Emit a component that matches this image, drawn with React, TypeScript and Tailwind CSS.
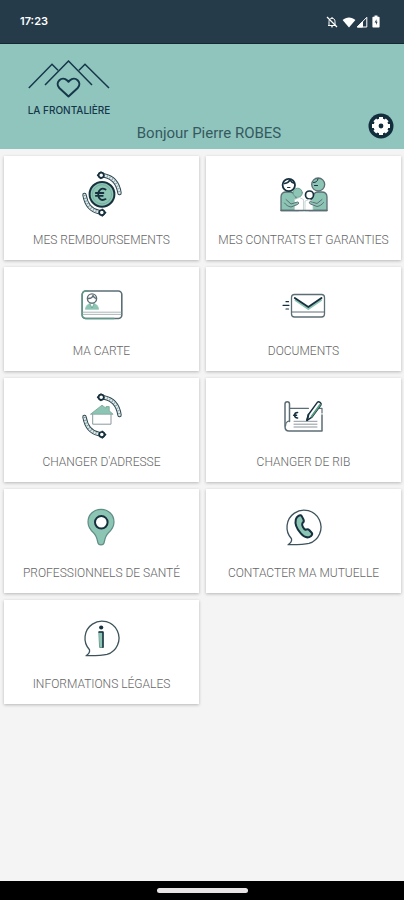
import type { ReactNode } from "react";

const INK = "#17303d";
const MINT = "#8cc5b4";
const LINE = "#5c6e75";

function Icon({ children }: { children: ReactNode }) {
  return (
    <svg
      viewBox="0 0 48 48"
      className="size-12"
      fill="none"
      stroke={INK}
      strokeWidth="1.3"
      strokeLinecap="round"
      strokeLinejoin="round"
      aria-hidden="true"
    >
      {children}
    </svg>
  );
}

// The two striped arrows that turn around an icon
function Rotation() {
  const bands = ["M26 5.5C34 7 40 13 41.5 23", "M6.5 25C8 34 13 40.5 21 42"];
  return (
    <g>
      {bands.map((d) => (
        <g key={d}>
          <path d={d} stroke="#2c4650" strokeWidth="4.4" />
          <path d={d} stroke="#dfeaea" strokeWidth="2.4" />
          <path d={d} strokeWidth="2.4" strokeLinecap="butt" strokeDasharray="0.9 2" stroke="#7f979c" />
        </g>
      ))}
      <path d="M19.5 5.2 23 2v6.600z" fill={INK} />
      <path d="M27.800 42.600 24.200 39.200V46z" fill={INK} />
      <circle cx="23.200" cy="5.200" r="2.600" fill="#fff" strokeWidth="1.700" />
      <circle cx="23.800" cy="42.600" r="2.600" fill="#fff" strokeWidth="1.700" />
    </g>
  );
}

function RefundIcon() {
  return (
    <Icon>
      <Rotation />
      <circle cx="24" cy="24.3" r="12.4" fill={MINT} strokeWidth="2" />
      <circle cx="24" cy="24.3" r="9.6" stroke="#6fa899" strokeWidth="0.8" />
      <path d="M27.6 19.6c-4-2.4-7.4.4-7.4 4.7s3.4 7.2 7.4 4.8M17.8 23h7.6M17.8 25.8h7" strokeWidth="1.8" />
    </Icon>
  );
}

function FamilyIcon() {
  return (
    <Icon>
      <path d="M1 40.5V27c0-3.5 2-5 5.5-5h4c3 0 4.5 2 6 6.5l2 5.5v6.5z" fill={MINT} stroke={LINE} />
      <path d="M47 40.5V27c0-3.5-2-5-5.5-5H38c-3 0-5 2-6 6.5l-3 4.500v7.500z" fill={MINT} stroke={LINE} />
      <circle cx="8.800" cy="15" r="6.200" fill="#fff" strokeWidth="1.800" />
      <path d="M4.500 13.500C7 13 9 11.800 10 9.800c1 2 2.500 3 4.500 3.500" strokeWidth="1.500" />
      <path d="M7.500 17.500h2.500" strokeWidth="1" />
      <circle cx="38.200" cy="14.500" r="6.500" fill={MINT} stroke={LINE} />
      <path d="M33.500 12.500c2.500 0 4-1.200 4.500-3.500M34.500 15.500h3" strokeWidth="1" />
      <circle cx="17.700" cy="22.800" r="4.600" fill={MINT} stroke="#6d9c91" strokeWidth="1" />
      <circle cx="29.500" cy="25" r="4" fill="#fff" strokeWidth="1.700" />
      <path d="M14.500 40.500V29.500l5-2 4 2v11z" fill="#fff" stroke="#b9cbc9" strokeWidth="0.800" />
      <path d="M25 40.500V31l4-1.500 4 2v9z" fill="#fff" stroke="#b9cbc9" strokeWidth="0.800" />
      <path
        d="M6 29.500l5 4.500 6.500-2c1.500 0 1.500 2 0 2.500l-6.500 2.500c-3-.5-5-2-6.500-4M42 29.500l-5 4-6.500-2c-1.500 0-1.500 2 0 2.500l6.500 2.500c3-.5 5-2 6.500-4"
        fill={MINT}
        stroke={LINE}
        strokeWidth="1"
      />
      <path d="M1 40.500h46" stroke={LINE} />
    </Icon>
  );
}

function CardIcon() {
  return (
    <Icon>
      <rect x="4.200" y="10" width="39.600" height="27.500" rx="3.500" stroke={LINE} strokeWidth="1.600" />
      <path d="M10 10H8a3.500 3.500 0 0 0-3.800 3.500v20.500A3.500 3.500 0 0 0 8 37.500h28" stroke="#5d9a87" strokeWidth="1.400" />
      <path d="M5 31.200h38M5 33.400h38" stroke="#a3aeb0" strokeWidth="0.900" />
      <path d="M7.500 28c.5-4 3-5.500 6.500-5.500s6 1.500 6.500 5.500z" fill={MINT} stroke={MINT} strokeWidth="0.800" />
      <path d="M12 23l2 4 2-4" fill="#fff" stroke="#5d9a87" strokeWidth="0.800" />
      <circle cx="14" cy="17.500" r="4.600" fill="#fff" stroke={LINE} strokeWidth="1.400" />
      <path d="M10.500 17.500c2.500 0 4-1 4.500-3 .5 1.500 1.500 2.500 3 3" stroke={LINE} />
    </Icon>
  );
}

function MailIcon() {
  return (
    <Icon>
      <rect x="11.500" y="13.500" width="33" height="22.500" rx="3" stroke={LINE} strokeWidth="1.300" />
      <path d="M12 31h32" stroke={LINE} strokeWidth="1" />
      <path d="M15.500 19.200 28.300 28l12.700-8.800" stroke={MINT} strokeWidth="2" />
      <path d="M14.800 17 28.300 26 41.500 17" strokeWidth="1.900" />
      <path d="M6 20.700h2.500M3 24.300h6M6 28h2.500" strokeWidth="1.200" />
    </Icon>
  );
}

function HomeIcon() {
  return (
    <Icon>
      <Rotation />
      <path d="M14.700 22v10.200H33V22" fill="#fff" stroke="#8c989b" strokeWidth="1" />
      <path d="M12.800 22 24 13.200l4 3v-1.600h3.200v4.200l3.600 3.200z" fill={MINT} stroke="#7fa79c" strokeWidth="0.900" />
    </Icon>
  );
}

function ChequeIcon() {
  return (
    <Icon>
      <path d="M9.500 29.500V12c0-3-4.500-3-4.500 0v22.500c0 3 1.500 4.500 4 4.500h33V23" stroke={LINE} strokeWidth="1.500" />
      <path d="M5.500 34c0-5 4-5.500 4-4.500M9.500 16.300h19M38.500 16.300H42V21" stroke={LINE} strokeWidth="1.200" />
      <path d="M14 29.300h23M14 32.200h23M14 35h23" stroke="#8b989b" strokeWidth="1" />
      <path d="M17.600 20.500c-2.200 0-3 1.200-3 2.700s.8 2.700 3 2.700M13.600 23.200h3" strokeWidth="1.500" />
      <path d="M27 28.300 28.500 22.500 37.500 10.200c1.300-1.300 4.300.8 3.500 2.600L32 25.200z" fill="#fff" strokeWidth="1.400" />
      <path d="M31.500 24.500 40 12.800" stroke="#559c82" strokeWidth="1.800" />
      <path d="M27 28.300 28.500 22.500" strokeWidth="1.800" />
    </Icon>
  );
}

function PinIcon() {
  return (
    <Icon>
      <path
        d="M23 6.300c7.500 0 13 5.500 13 12.700 0 5-2.500 8-5.500 10.800-2.500 2.400-3.500 5-4.300 9.500-.6 3.400-5.800 3.400-6.400 0-.8-4.500-1.800-7.100-4.300-9.500C12.500 27 10 24 10 19c0-7.200 5.500-12.700 13-12.700z"
        fill={MINT}
        stroke="#5f8e84"
        strokeWidth="1.200"
      />
      <circle cx="23.300" cy="19.300" r="6.300" fill="#fff" strokeWidth="2" />
    </Icon>
  );
}

function Bubble() {
  return (
    <path
      d="M8 41.700c2.800-1.500 4-3.500 3.500-6A17 17 0 1 1 29 40.400c-6 1.500-13 1.300-21 1.300z"
      stroke="#3d525b"
      strokeWidth="1.300"
    />
  );
}

function PhoneIcon() {
  return (
    <Icon>
      <Bubble />
      <path
        d="M18.500 12.800c1.600-1 2.800-.5 3.500.8l1.600 3.200c.6 1.300.2 2.300-1.300 3.500-.8 1.900 1.400 5.800 3.200 6.400 1.700-.6 2.900-.5 3.900.5l2.300 2.500c.9 1.200.7 2.100-.6 3.200-2.900 2.400-6.600 1.700-10.300-2.500-3.900-4.500-6-10.100-5-14 .5-1.900 1.400-2.800 2.700-3.600z"
        fill={MINT}
        strokeWidth="2"
      />
    </Icon>
  );
}

function InfoIcon() {
  return (
    <Icon>
      <Bubble />
      <circle cx="23.200" cy="13.500" r="2.100" fill={INK} stroke="none" />
      <path d="M21.200 18h3.800v15.500h-3z" fill={MINT} stroke="#4f8577" strokeWidth="0.800" />
      <path d="M21 18.100h4v15.200" strokeWidth="1.500" />
    </Icon>
  );
}

const tiles = [
  { label: "MES REMBOURSEMENTS", icon: <RefundIcon /> },
  { label: "MES CONTRATS ET GARANTIES", icon: <FamilyIcon /> },
  { label: "MA CARTE", icon: <CardIcon /> },
  { label: "DOCUMENTS", icon: <MailIcon /> },
  { label: "CHANGER D'ADRESSE", icon: <HomeIcon /> },
  { label: "CHANGER DE RIB", icon: <ChequeIcon /> },
  { label: "PROFESSIONNELS DE SANTÉ", icon: <PinIcon /> },
  { label: "CONTACTER MA MUTUELLE", icon: <PhoneIcon /> },
  { label: "INFORMATIONS LÉGALES", icon: <InfoIcon /> },
];

function StatusBar() {
  return (
    <div className="flex h-11 items-center justify-between border-b border-[#122833] bg-[#263b4a] pr-6 pl-5 text-white">
      <span className="font-['Inter'] text-[11px] font-semibold">17:23</span>
      <div className="flex items-center">
        <svg viewBox="0 0 12 12" className="size-3" fill="none" stroke="#fff" strokeWidth="1" aria-hidden="true">
          <path d="M2 9.500h8M3 9V5.500C3 3.500 4.200 2.300 6 2.300S9 3.500 9 5.500V9M6 1v1.300" />
          <path d="M1 1l10 10" strokeWidth="1.300" />
          <path d="M5 10.800h2" />
        </svg>
        <svg viewBox="0 0 14 12" className="ml-1 h-3 w-3.5" fill="#fff" aria-hidden="true">
          <path d="M7 11.500.6 4C4.200.6 9.800.6 13.400 4z" />
        </svg>
        <svg viewBox="0 0 11 12" className="size-3" fill="none" stroke="#fff" strokeWidth="1" aria-hidden="true">
          <path d="M.8 11 10.300 1.300V11z" />
          <path d="M.8 11 6 5.800V11z" fill="#fff" />
        </svg>
        <svg viewBox="0 0 8 13" className="ml-1 h-[13px] w-2" fill="#fff" aria-hidden="true">
          <path d="M2.500.5h3v1.300h1.100c.6 0 1 .4 1 1v8.700c0 .6-.4 1-1 1H1.400c-.6 0-1-.4-1-1V2.800c0-.6.4-1 1-1h1.100z" />
          <path d="M4.500 4.200 2.600 7.500H4v2.600l1.600-3.400H4.500z" fill="#263b4a" />
        </svg>
      </div>
    </div>
  );
}

function Logo() {
  return (
    <div className="flex w-[82px] flex-col items-center text-[#15374a]">
      <svg viewBox="0 0 82 38" className="w-full" fill="none" stroke="currentColor" strokeWidth="1.5" aria-hidden="true">
        <path d="M.8 28 24 4.200l6 6M17 25 40.500 1 64 25M51 10.200l6-6L81 28" />
        <path
          d="M40.500 36.500 31.300 28c-5-5.500 2.500-12.500 8-7.500l1.200 1.300 1.200-1.300c5.500-5 13 2 8 7.500z"
          strokeWidth="2"
          strokeLinejoin="round"
        />
      </svg>
      <span className="mt-1 font-['Inter'] text-[10px] leading-4 font-medium whitespace-nowrap">
        LA FRONTALIÈRE
      </span>
    </div>
  );
}

function Header() {
  return (
    <header className="bg-[#90c5be] pt-4 pb-2">
      <div className="ml-7">
        <Logo />
      </div>
      <div className="mt-[7px] grid grid-cols-[1fr_auto_1fr] items-end pr-2.5 pl-6">
        <h1 className="col-start-2 font-['Roboto'] text-[15px] leading-4 text-[#355a5e]">
          Bonjour Pierre ROBES
        </h1>
        <button type="button" aria-label="Paramètres" className="-mt-4 mb-0.5 justify-self-end">
          <svg viewBox="0 0 26 26" className="size-[26px]" aria-hidden="true">
            <circle cx="13" cy="13" r="12.500" fill="#122d3c" />
            <circle cx="13" cy="13" r="7.500" fill="#fff" />
            <path
              d="M13 4v18M4 13h18M6.800 6.800l12.400 12.400M19.200 6.800 6.800 19.200"
              stroke="#fff"
              strokeWidth="4"
              strokeLinejoin="round"
            />
            <circle cx="13" cy="13" r="2.400" fill="#122d3c" />
          </svg>
        </button>
      </div>
    </header>
  );
}

export default function App() {
  return (
    <div className="flex min-h-screen flex-col bg-[#f4f4f4]">
      <StatusBar />
      <Header />
      <main className="flex-1 pt-[7px] pr-[3px] pl-1">
        <div className="grid grid-cols-2 gap-[7px]">
          {tiles.map((tile) => (
            <button
              key={tile.label}
              type="button"
              className="flex flex-col items-center bg-white pt-3.5 pb-3 shadow-[0_1px_3px_rgba(0,0,0,0.25)]"
            >
              {tile.icon}
              <span className="mt-3.5 font-['Roboto'] text-xs leading-4 font-light whitespace-nowrap text-[#666666]">
                {tile.label}
              </span>
            </button>
          ))}
        </div>
      </main>
      <div className="flex h-[19px] items-center justify-center bg-black">
        <span className="h-[5px] w-[91px] rounded-full bg-[#e8e4e6]" />
      </div>
    </div>
  );
}
